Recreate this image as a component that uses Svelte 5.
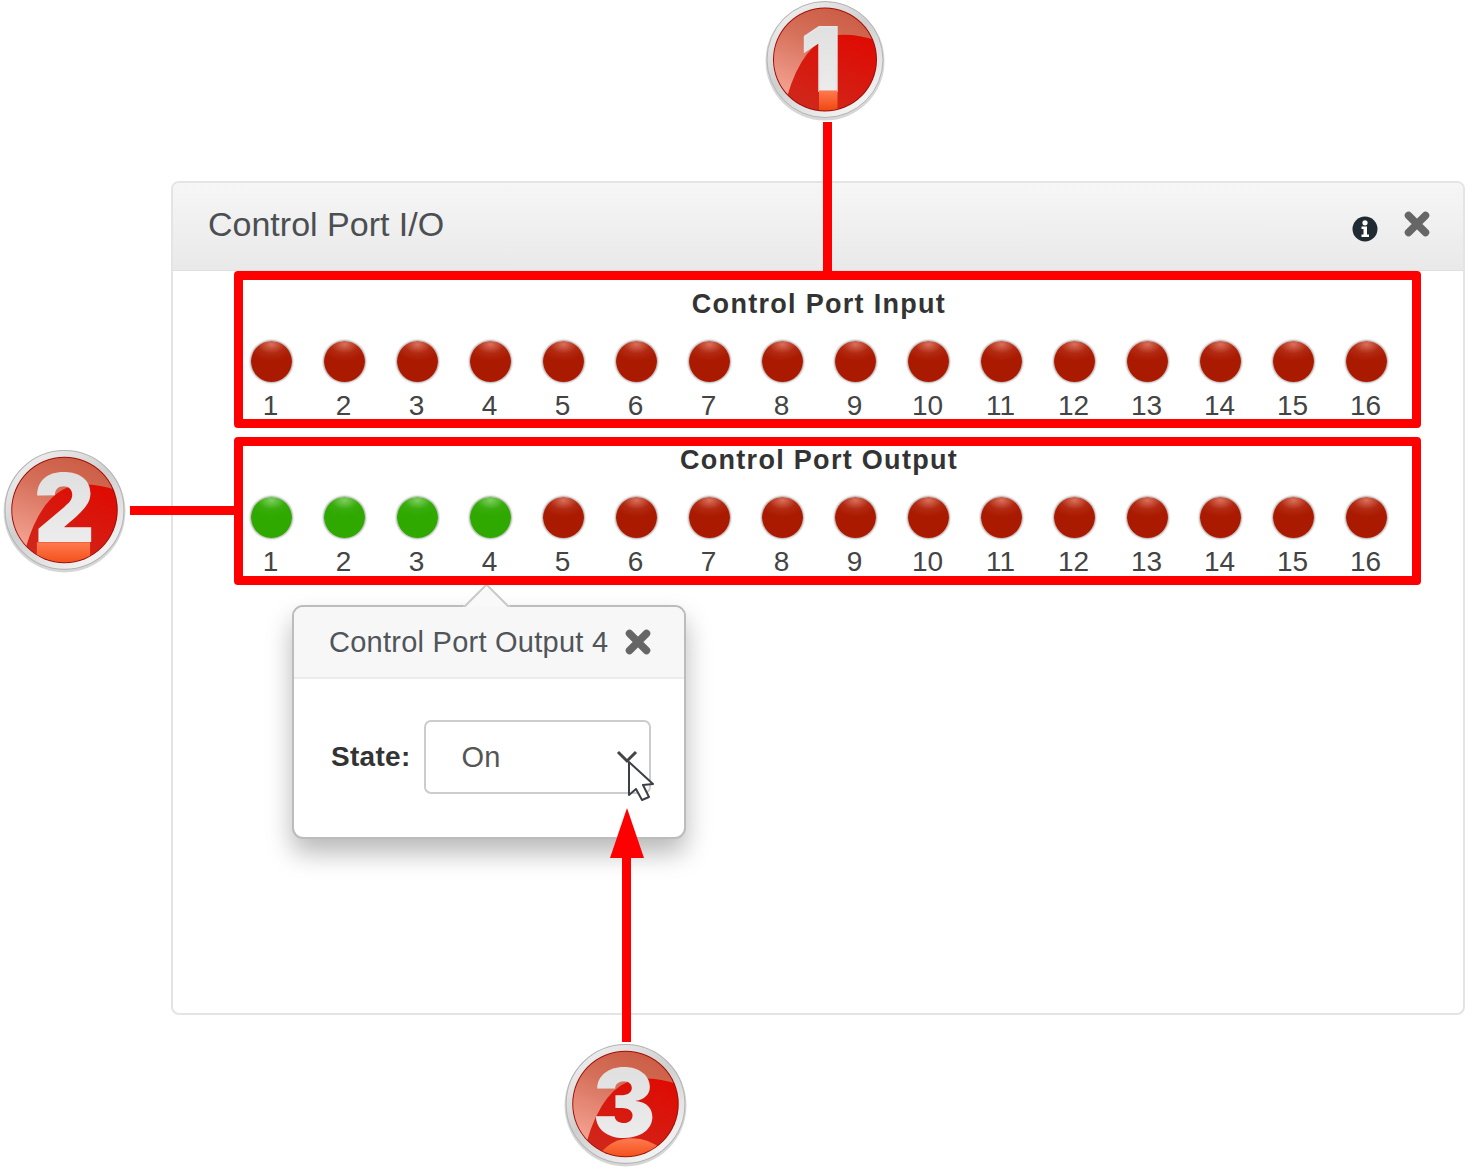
<script lang="ts">
	const ports = Array.from({ length: 16 }, (_, i) => i + 1);
	const sections = [
		{ title: 'Control Port Input', on: 0 },
		{ title: 'Control Port Output', on: 4 }
	];
	const badges = [
		{ n: '1', cls: 'b1', size: 88, x: 58, y: 91.5, glow: 'M56 91.5h18.5v20h-18.5z' },
		{ n: '2', cls: 'b2', size: 92, x: 62, y: 92, glow: 'M35 92H87V116H35z' },
		{ n: '3', cls: 'b3', size: 92, x: 60.5, y: 93, glow: 'M38 108Q50 94 68 94T99 106V116H38z' }
	];
</script>

<div class="page">
	<section class="panel">
		<header class="panel-head">
			<h1>Control Port I/O</h1>
			<div class="tools">
				<svg class="info" viewBox="0 0 26 26" width="26" height="26">
					<circle cx="13" cy="13" r="12.5" fill="#1f2a33" />
					<circle cx="13" cy="6.8" r="2.6" fill="#fff" />
					<path d="M9.5 10.5h5.5v8h2v2.5h-7.5v-2.5h2v-5.5h-2z" fill="#fff" />
				</svg>
				<svg class="close" viewBox="0 0 26 26" width="26" height="26">
					<path d="M4.5 4.5l17 17M21.5 4.5l-17 17" stroke="#666" stroke-width="7.5" stroke-linecap="round" />
				</svg>
			</div>
		</header>
		<div class="panel-body">
			{#each sections as s}
				<div class="ports">
					<h2>{s.title}</h2>
					<div class="row">
						{#each ports as p}
							<div class="port">
								<span class="led" class:green={p <= s.on}></span>
								<span class="num">{p}</span>
							</div>
						{/each}
					</div>
				</div>
			{/each}
		</div>

		<div class="popover">
			<span class="pop-arrow"></span>
			<div class="pop-head">
				<span>Control Port Output 4</span>
				<svg viewBox="0 0 26 26" width="26" height="26">
					<path d="M4.5 4.5l17 17M21.5 4.5l-17 17" stroke="#666" stroke-width="7.5" stroke-linecap="round" />
				</svg>
			</div>
			<div class="pop-body">
				<label for="state">State:</label>
				<div class="select" id="state">
					<span>On</span>
					<svg viewBox="0 0 22 14" width="22" height="14">
						<path d="M2 2l9 9 9-9" fill="none" stroke="#444" stroke-width="3" />
					</svg>
				</div>
			</div>
		</div>
	</section>

	<!-- callouts drawn over the screenshot -->
	<div class="mark box1"></div>
	<div class="mark box2"></div>
	<div class="mark line1"></div>
	<div class="mark line2"></div>
	<div class="mark line3"></div>
	<svg class="up-arrow" viewBox="0 0 34 50" width="34" height="50">
		<path d="M17 0L34 50H0z" fill="#f00" />
	</svg>
	<svg class="cursor" viewBox="0 0 26 40" width="26" height="40">
		<path d="M1 1v33l7-6 6 11 7-3-6-12 10-1z" fill="#fff" stroke="#3c4046" stroke-width="2" stroke-linejoin="round" />
	</svg>

	{#each badges as b}
		<svg class="badge {b.cls}" viewBox="0 0 124 124">
			<defs>
				<linearGradient id="ring-{b.n}" x1="0.15" y1="0" x2="0.85" y2="1">
					<stop offset="0" stop-color="#f2f2f2" />
					<stop offset="0.45" stop-color="#cfcfcf" />
					<stop offset="1" stop-color="#fafafa" />
				</linearGradient>
				<linearGradient id="red-{b.n}" x1="0.7" y1="0.1" x2="0.3" y2="1">
					<stop offset="0" stop-color="#e00800" />
					<stop offset="1" stop-color="#d0281c" />
				</linearGradient>
				<linearGradient id="gloss-{b.n}" x1="0.65" y1="0" x2="0.2" y2="0.95">
					<stop offset="0" stop-color="#c9583f" />
					<stop offset="0.45" stop-color="#d5705a" />
					<stop offset="1" stop-color="#f4a090" />
				</linearGradient>
				<linearGradient id="digit-{b.n}" x1="0" y1="0" x2="0" y2="1">
					<stop offset="0" stop-color="#dcdcdc" />
					<stop offset="1" stop-color="#f0f0f0" />
				</linearGradient>
				<linearGradient id="glow-{b.n}" x1="0" y1="0" x2="0" y2="1">
					<stop offset="0" stop-color="#ff7a50" />
					<stop offset="1" stop-color="#f04810" />
				</linearGradient>
				<clipPath id="clip-{b.n}"><circle cx="62" cy="60.5" r="51" /></clipPath>
			</defs>
			<circle cx="62" cy="62" r="59.5" fill="#777" opacity="0.3" />
			<circle cx="62" cy="60.5" r="58" fill="url(#ring-{b.n})" stroke="#b4b4b4" stroke-width="1" />
			<circle cx="62" cy="60.5" r="52" fill="#9a1008" />
			<circle cx="62" cy="60.5" r="51" fill="url(#red-{b.n})" />
			<g clip-path="url(#clip-{b.n})">
				<path d="M0 0H120V44Q96 34 74 36Q40 42 24 98L0 98z" fill="url(#gloss-{b.n})" />
			</g>
			<text x={b.x} y={b.y} text-anchor="middle" font-size={b.size} fill="url(#digit-{b.n})">{b.n}</text>
			<g clip-path="url(#clip-{b.n})">
				<path d={b.glow} fill="url(#glow-{b.n})" />
			</g>
		</svg>
	{/each}
</div>

<style>
	:global(body) {
		background: #fff;
		font-family: 'Liberation Sans', Arial, sans-serif;
	}

	.page {
		position: relative;
		width: 1472px;
		height: 1169px;
		padding: 181px 7px 0 171px;
		box-sizing: border-box;
		overflow: hidden;
	}

	.panel {
		position: relative;
		height: 834px;
		border: 2px solid #e4e4e4;
		border-radius: 8px;
		box-sizing: border-box;
	}

	.panel-head {
		display: flex;
		align-items: center;
		justify-content: space-between;
		height: 88px;
		padding: 0 33px 0 35px;
		background: linear-gradient(#f6f6f6, #e9e9e9);
		border-bottom: 1px solid #e0e0e0;
		border-radius: 6px 6px 0 0;
		box-sizing: border-box;
	}

	h1 {
		margin: 0 0 4px;
		font-size: 34px;
		font-weight: 400;
		color: #4c4f52;
	}

	.tools {
		display: flex;
		align-items: flex-start;
		gap: 26px;
	}

	.info {
		margin-top: 5px;
	}

	.panel-body {
		display: flex;
		flex-direction: column;
		padding: 15px 0 0 62px;
	}

	.ports {
		width: 1168px;
		height: 156px;
	}

	h2 {
		margin: 0;
		height: 36px;
		line-height: 36px;
		text-align: center;
		font-size: 27px;
		font-weight: 700;
		letter-spacing: 1.3px;
		color: #333;
	}

	.row {
		display: flex;
		margin-top: 19px;
	}

	.port {
		display: flex;
		flex-direction: column;
		align-items: center;
		width: 73px;
	}

	.led {
		width: 41px;
		height: 41px;
		border-radius: 50%;
		background: radial-gradient(ellipse 60% 40% at 50% 8%, #d9705c 0%, #b22a12 55%, #aa1a00 100%);
		box-shadow: 0 0 2px 1px #a8a8a8;
	}

	.led.green {
		background: radial-gradient(ellipse 60% 40% at 50% 8%, #7fce60 0%, #38ac0c 55%, #2fa800 100%);
	}

	.num {
		margin-top: 8px;
		margin-left: -2px;
		line-height: 32px;
		font-size: 28px;
		color: #444;
	}

	.popover {
		position: absolute;
		left: 119px;
		top: 422px;
		width: 394px;
		height: 234px;
		background: #fff;
		border: 2px solid #bcbcbc;
		border-radius: 11px;
		box-shadow: 0 14px 26px rgba(0, 0, 0, 0.28);
		box-sizing: border-box;
	}

	.pop-arrow {
		position: absolute;
		left: 176px;
		top: -17px;
		width: 33px;
		height: 33px;
		background: #f9f9f9;
		border: 2px solid #c8c8c8;
		border-right: none;
		border-bottom: none;
		transform: rotate(45deg);
		box-sizing: border-box;
	}

	.pop-head {
		position: relative;
		display: flex;
		align-items: center;
		justify-content: space-between;
		height: 72px;
		padding: 0 33px 0 35px;
		font-size: 29px;
		letter-spacing: 0.25px;
		color: #50555a;
		background: #f7f7f7;
		border-bottom: 2px solid #ececec;
		border-radius: 9px 9px 0 0;
		box-sizing: border-box;
	}

	.pop-body {
		display: flex;
		align-items: center;
		gap: 13px;
		padding: 41px 0 0 37px;
	}

	label {
		font-size: 28px;
		font-weight: 700;
		letter-spacing: 0.3px;
		color: #333;
	}

	.select {
		display: flex;
		align-items: center;
		justify-content: space-between;
		width: 227px;
		height: 74px;
		padding: 0 11px 0 36px;
		font-size: 29px;
		color: #555;
		border: 2px solid #ccc;
		border-radius: 7px;
		box-sizing: border-box;
	}

	.mark {
		position: absolute;
	}

	.box1,
	.box2 {
		left: 234px;
		width: 1187px;
		border: 9px solid #f00;
		border-radius: 4px;
		box-sizing: border-box;
	}

	.box1 {
		top: 271px;
		height: 157px;
	}

	.box2 {
		top: 437px;
		height: 148px;
	}

	.line1,
	.line2,
	.line3 {
		background: #f00;
	}

	.line1 {
		left: 823px;
		top: 122px;
		width: 9px;
		height: 150px;
	}

	.line2 {
		left: 130px;
		top: 506px;
		width: 105px;
		height: 9px;
	}

	.line3 {
		left: 622px;
		top: 850px;
		width: 9px;
		height: 192px;
	}

	.up-arrow {
		position: absolute;
		left: 610px;
		top: 808px;
	}

	.cursor {
		position: absolute;
		left: 628px;
		top: 761px;
	}

	.badge {
		position: absolute;
		width: 124px;
		height: 124px;
	}

	.badge text {
		font-family: Inter, 'Liberation Sans', sans-serif;
		font-weight: 900;
	}

	.b1 text {
		stroke: #e4e4e4;
		stroke-width: 2;
	}

	.b1 {
		left: 763px;
		top: -1.5px;
	}

	.b2 {
		left: 0.5px;
		top: 448px;
		width: 127px;
		height: 127px;
	}

	.b3 {
		left: 561.5px;
		top: 1042px;
		width: 127px;
		height: 127px;
	}
</style>
